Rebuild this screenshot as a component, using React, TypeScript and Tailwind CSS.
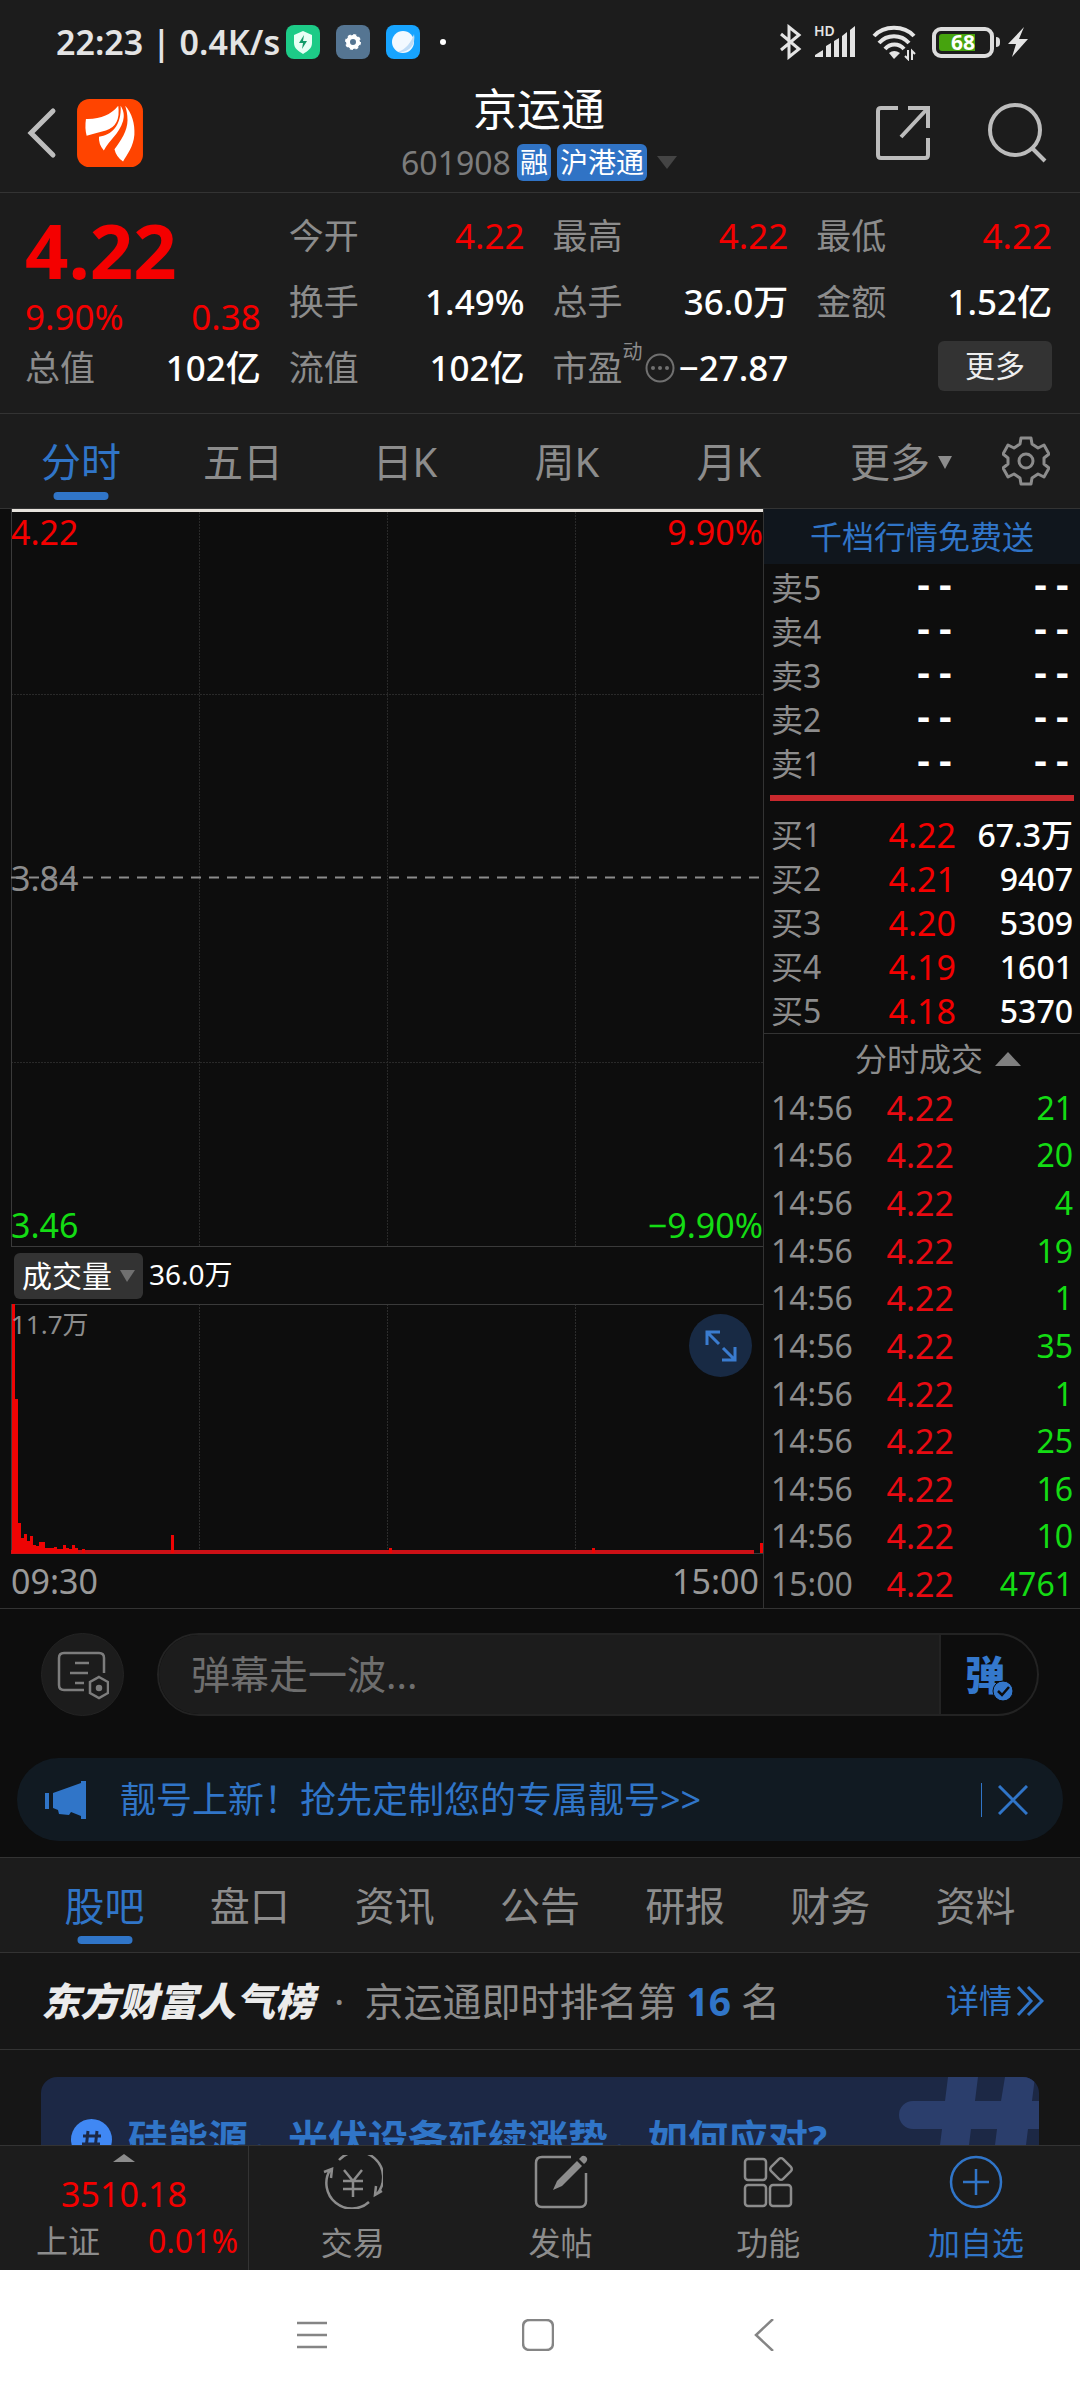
import { useState } from 'react';
import type { ReactNode } from 'react';

const quoteColumns = [
  [
    { label: '今开', value: '4.22', red: true },
    { label: '换手', value: '1.49%' },
    { label: '流值', value: '102亿' },
  ],
  [
    { label: '最高', value: '4.22', red: true },
    { label: '总手', value: '36.0万' },
    { label: '市盈', value: '−27.87', dynamic: true },
  ],
  [
    { label: '最低', value: '4.22', red: true },
    { label: '金额', value: '1.52亿' },
  ],
];

const periods = ['分时', '五日', '日K', '周K', '月K'];

const sells = ['卖5', '卖4', '卖3', '卖2', '卖1'];

const buys = [
  { label: '买1', price: '4.22', amount: '67.3万' },
  { label: '买2', price: '4.21', amount: '9407' },
  { label: '买3', price: '4.20', amount: '5309' },
  { label: '买4', price: '4.19', amount: '1601' },
  { label: '买5', price: '4.18', amount: '5370' },
];

const trades = [
  ['14:56', '21'],
  ['14:56', '20'],
  ['14:56', '4'],
  ['14:56', '19'],
  ['14:56', '1'],
  ['14:56', '35'],
  ['14:56', '1'],
  ['14:56', '25'],
  ['14:56', '16'],
  ['14:56', '10'],
  ['15:00', '4761'],
];

// [x, height] of the bars that rise above the base line
const volumeBars = [
  [1, 249], [4, 154], [7, 30], [10, 15], [13, 19], [16, 12], [19, 17],
  [22, 8], [25, 7], [28, 11], [31, 11], [34, 5], [37, 5], [40, 5],
  [43, 6], [46, 4], [49, 4], [52, 8], [55, 5], [58, 4], [61, 8],
  [64, 5], [71, 4], [160, 18], [378, 5], [581, 5], [749, 10],
];

const sections = ['股吧', '盘口', '资讯', '公告', '研报', '财务', '资料'];

const StatusBar = () => (
  <div className="flex h-[84px] items-center justify-between pl-14 pr-[52px] text-[#e4e4e4]">
    <div className="flex items-center gap-4">
      <span className="-mr-[10px] text-[34px] leading-10 font-semibold whitespace-nowrap">
        22:23 | 0.4K/s
      </span>
      <svg width="34" height="34" viewBox="0 0 34 34">
        <rect width="34" height="34" rx="8" fill="#1dcb87" />
        <path d="M17 6l9 4v8c0 5-4 8-9 11-5-3-9-6-9-11v-8z" fill="#e9fff5" />
        <path d="M18 10l-5 8h4l-1 6 5-8h-4z" fill="#149b68" />
      </svg>
      <svg width="34" height="34" viewBox="0 0 34 34">
        <rect width="34" height="34" rx="8" fill="#557592" />
        <circle cx="17" cy="17" r="5" fill="none" stroke="#fff" strokeWidth="4" />
        <circle
          cx="17"
          cy="17"
          r="7"
          fill="none"
          stroke="#fff"
          strokeWidth="2"
          strokeDasharray="3 2.5"
        />
      </svg>
      <svg width="34" height="34" viewBox="0 0 34 34">
        <rect width="34" height="34" rx="8" fill="#17a4ff" />
        <circle cx="17" cy="17" r="11" fill="#f2f9ff" />
        <path d="M28 9c2 10-4 19-16 18 8-3 13-9 16-18z" fill="#bfdcf6" />
      </svg>
      <span className="ml-1 size-[6px] rounded-full bg-white" />
    </div>
    <div className="flex items-center">
      <svg width="24" height="36" viewBox="0 0 24 36" fill="none" stroke="currentColor" strokeWidth="3">
        <path d="M3 10l18 15-10 8V3l10 8L3 26" />
      </svg>
      <div className="relative ml-3 flex h-9 w-[42px]">
        <span className="absolute top-0 left-0 text-[14px] leading-[14px] font-semibold">HD</span>
        <svg width="42" height="36" viewBox="0 0 42 36" fill="currentColor">
          <path d="M1 33v-2l8-5v7zM12 33V22l5-3v14zM20 33V17l5-3v19zM28 33V12l5-4v25zM36 33V6l5-4v31z" />
        </svg>
      </div>
      <svg className="ml-4" width="44" height="38" viewBox="0 0 44 38" fill="none" stroke="currentColor" strokeWidth="4">
        <path d="M2 13C12 2 32 2 42 13M7 20c8-9 22-9 30 0M13 26c5-6 14-6 19 0" />
        <path d="M17 30q5-4 11 0l-6 6z" fill="currentColor" stroke="none" />
        <path d="M36 27v9l-3-3M40 37v-9l3 3" strokeWidth="2" />
      </svg>
      <div className="relative ml-4 flex h-[31px] w-[62px] items-center justify-center rounded-[9px] border-4 border-[#dcdcdc]">
        <span className="absolute inset-y-[3px] left-[3px] w-9 rounded-l-[3px] bg-[#46a30e]" />
        <span className="relative text-[21px] leading-6 font-bold text-white">68</span>
      </div>
      <span className="ml-[2px] h-[10px] w-1 rounded-r bg-[#dcdcdc]" />
      <svg className="ml-2" width="20" height="30" viewBox="0 0 20 30" fill="currentColor">
        <path d="M16 0L0 17h8L4 30l16-18h-9z" />
      </svg>
    </div>
  </div>
);

const TitleBar = () => (
  <div className="grid h-[109px] grid-cols-[1fr_auto_1fr] items-center border-b border-[#333] pr-8 pb-[14px] pl-[26px]">
    <div className="flex items-center gap-5">
      <button aria-label="返回">
        <svg width="31" height="52" viewBox="0 0 31 52" fill="none" stroke="#bdbdbd" strokeWidth="5" strokeLinecap="round">
          <path d="M27 4L5 26l22 22" />
        </svg>
      </button>
      <svg width="66" height="68" viewBox="0 0 192 198">
        <rect width="192" height="198" rx="36" fill="#ff4400" />
        <g fill="#fff">
          <path d="M26 58Q88 60 120 20Q128 78 84 92Q54 100 28 107Q22 84 26 58Z" />
          <path d="M127 20C137 36 138 50 134 64C122 104 94 118 78 150Q62 132 64 110C100 106 130 78 127 20Z" />
          <path d="M140 20C160 40 169 74 167 104C164 140 146 160 134 182Q114 168 109 146C128 122 147 92 147 62C147 44 144 32 140 20Z" />
        </g>
      </svg>
    </div>
    <div className="flex flex-col items-center gap-[10px] pl-1">
      <h1 className="text-[44px] leading-[50px] text-white">京运通</h1>
      <div className="flex items-center gap-[6px]">
        <span className="text-[32px] leading-9 text-[#7d7d7d]">601908</span>
        <span className="rounded-[6px] bg-[#3073c5] px-[3px] text-[28px] leading-[37px] text-white">融</span>
        <span className="rounded-[6px] bg-[#3073c5] px-[3px] text-[28px] leading-[37px] text-white">沪港通</span>
        <svg className="ml-1" width="20" height="13" viewBox="0 0 20 13" fill="#444">
          <path d="M0 0h20L10 13z" />
        </svg>
      </div>
    </div>
    <div className="flex items-center justify-end gap-[58px] text-[#bcbcbc]">
      <button aria-label="分享">
        <svg width="54" height="54" viewBox="0 0 54 54" fill="none" stroke="currentColor" strokeWidth="4">
          <path d="M22 2H5q-3 0-3 3v44q0 3 3 3h44q3 0 3-3V32M32 2h20v20M52 2L25 31" />
        </svg>
      </button>
      <button aria-label="搜索">
        <svg width="60" height="60" viewBox="0 0 60 60" fill="none" stroke="currentColor" strokeWidth="4">
          <circle cx="27" cy="27" r="25" />
          <path d="M44 45l13 13" />
        </svg>
      </button>
    </div>
  </div>
);

const Quote = () => (
  <section className="grid h-[221px] grid-cols-4 gap-7 border-b border-[#333] pr-7 pl-[25px] text-[35px]">
    <div className="pt-[14px]">
      <div className="text-[76px] leading-[86px] font-bold text-[#f40000]">4.22</div>
      <div className="flex justify-between leading-[48px] text-[#f40000]">
        <span>9.90%</span>
        <span>0.38</span>
      </div>
      <div className="flex justify-between leading-[54px]">
        <span className="text-[#8c8c8c]">总值</span>
        <span className="font-medium text-white">102亿</span>
      </div>
    </div>
    {quoteColumns.map((column, index) => (
      <div key={index} className="pt-[10px]">
        {column.map((item) => (
          <div key={item.label} className="flex items-center justify-between leading-[66px] whitespace-nowrap">
            <span className="flex items-center text-[#8c8c8c]">
              {item.label}
              {item.dynamic && (
                <>
                  <span className="relative -top-4 text-[20px]">动</span>
                  <svg className="ml-[2px]" width="30" height="30" viewBox="0 0 30 30" fill="#707070">
                    <circle cx="15" cy="15" r="13.5" fill="none" stroke="#707070" strokeWidth="2" />
                    <circle cx="8" cy="15" r="2" />
                    <circle cx="15" cy="15" r="2" />
                    <circle cx="22" cy="15" r="2" />
                  </svg>
                </>
              )}
            </span>
            <span className={item.red ? 'text-[#f40000]' : 'font-medium text-white'}>
              {item.value}
            </span>
          </div>
        ))}
        {column.length < 3 && (
          <div className="flex justify-end pt-[6px]">
            <button className="w-[114px] rounded-[6px] bg-[#333] text-[30px] leading-[50px] text-[#eee]">
              更多
            </button>
          </div>
        )}
      </div>
    ))}
  </section>
);

interface TabProps {
  label: string;
  active: boolean;
  className: string;
  onClick: () => void;
}

const Tab = ({ label, active, className, onClick }: TabProps) => (
  <button
    onClick={onClick}
    className={`relative flex items-center justify-center pt-[2px] text-[40px] ${className}
      ${active ? 'text-[#3075c8]' : 'text-[#8c8c8c]'}`}
  >
    {label}
    {active && (
      <span className="absolute bottom-2 left-1/2 h-2 w-[55px] -translate-x-1/2 rounded-full bg-[#3075c8]" />
    )}
  </button>
);

const PeriodTabs = () => {
  const [period, setPeriod] = useState('分时');

  return (
    <nav className="flex h-[95px] border-b border-[#333]">
      {periods.map((p) => (
        <Tab key={p} label={p} active={p === period} className="w-[15%]" onClick={() => setPeriod(p)} />
      ))}
      <button className="flex flex-1 items-center justify-center gap-2 pt-[2px] pl-5 text-[40px] text-[#8c8c8c]">
        更多
        <svg width="14" height="13" viewBox="0 0 14 13" fill="currentColor">
          <path d="M0 0h14L7 13z" />
        </svg>
      </button>
      <button aria-label="设置" className="flex w-[10%] items-center justify-center">
        <svg width="48" height="50" viewBox="0 0 48 50" fill="none" stroke="#8c8c8c" strokeWidth="3" strokeLinejoin="round">
          <path d="M19 2h10l1 6 6 4 6-3 5 9-5 4v6l5 4-5 9-6-3-6 4-1 6H19l-1-6-6-4-6 3-5-9 5-4v-6l-5-4 5-9 6 3 6-4z" />
          <circle cx="24" cy="25" r="7" />
        </svg>
      </button>
    </nav>
  );
};

const Chart = () => (
  <div className="min-w-0 flex-1 border-r border-[#333] pl-[11px] text-[34px] leading-10">
    <div className="relative">
      <svg className="block h-[738px] w-full" viewBox="0 0 752 738" preserveAspectRatio="none" fill="none">
        <path d="M188.5 3v735M376.5 3v735M564.5 3v735M0 185.5h752M0 553.5h752" stroke="#292929" strokeDasharray="2 1" />
        <path d="M.5 0v738M0 737.5h752" stroke="#3a3a3a" />
        <path d="M0 368.5h752" stroke="#8c8c8c" strokeWidth="2" strokeDasharray="10 8" />
        <path d="M1 1.5h751" stroke="#e6e2dc" strokeWidth="3" />
      </svg>
      <span className="absolute top-[3px] left-0 text-[#f40000]">4.22</span>
      <span className="absolute top-[3px] right-0 text-[#f40000]">9.90%</span>
      <span className="absolute top-1/2 left-0 -translate-y-1/2 text-[#8c8c8c]">3.84</span>
      <span className="absolute bottom-[2px] left-0 text-[#14dc14]">3.46</span>
      <span className="absolute right-0 bottom-[2px] text-[#14dc14]">−9.90%</span>
    </div>
    <div className="flex h-[57px] items-center gap-[6px] pl-[3px] text-white">
      <button className="flex h-[46px] items-center gap-2 rounded-[6px] bg-[#333] px-2 text-[30px]">
        成交量
        <svg width="15" height="12" viewBox="0 0 15 12" fill="#707070">
          <path d="M0 0h15L7 12z" />
        </svg>
      </button>
      <span className="pb-1 text-[28px]">36.0万</span>
    </div>
    <div className="relative">
      <svg className="block h-[250px] w-full" viewBox="0 0 752 250" preserveAspectRatio="none">
        <path d="M188.5 0v250M376.5 0v250M564.5 0v250" stroke="#2c2c2c" strokeDasharray="2 1" />
        <path d="M0 .5h752M.5 0v250M0 249.5h752" stroke="#3a3a3a" fill="none" />
        <path d="M0 246h743v4H0z" fill="#cc1016" />
        {volumeBars.map(([x, height]) => (
          <rect key={x} x={x} y={249 - height} width="3" height={height} fill="#ee0404" />
        ))}
      </svg>
      <span className="absolute top-0 left-0 text-[26px] text-[#8c8c8c]">11.7万</span>
      <button
        aria-label="全屏"
        className="absolute top-[10px] right-[11px] flex size-[63px] items-center justify-center rounded-full bg-[#182a44]"
      >
        <svg width="34" height="34" viewBox="0 0 34 34" fill="none" stroke="#3a7cd0" strokeWidth="3">
          <path d="M3 16V3h13M3 3l12 12M31 18v13H18M31 31L19 19" />
        </svg>
      </button>
    </div>
    <div className="flex h-[54px] items-center justify-between pr-1 text-[#999]">
      <span>09:30</span>
      <span>15:00</span>
    </div>
  </div>
);

const OrderBook = () => (
  <aside className="flex w-[316px] shrink-0 flex-col text-[32px] leading-10">
    <a href="#level" className="mb-[2px] bg-[#10161d] text-center leading-[55px] text-[#3075c8]">
      千档行情免费送
    </a>
    <table className="mx-[7px] table-fixed">
      <tbody>
        {sells.map((label) => (
          <tr key={label} className="h-11">
            <th className="w-[68px] p-0 text-left font-normal text-[#8c8c8c]">{label}</th>
            <td className="w-[117px] p-0 text-right font-['Liberation_Mono',monospace] text-[36px] font-bold text-white">--</td>
            <td className="p-0 text-right font-['Liberation_Mono',monospace] text-[36px] font-bold text-white">--</td>
          </tr>
        ))}
      </tbody>
    </table>
    <div className="mx-[6px] mt-[9px] mb-3 h-[6px] bg-[#c8282d]" />
    <table className="mx-[7px] table-fixed">
      <tbody>
        {buys.map((row) => (
          <tr key={row.label} className="h-11">
            <th className="w-[68px] p-0 text-left font-normal text-[#8c8c8c]">{row.label}</th>
            <td className="w-[117px] p-0 text-right text-[34px] text-[#f40000]">{row.price}</td>
            <td className="p-0 text-right font-medium text-white">{row.amount}</td>
          </tr>
        ))}
      </tbody>
    </table>
    <button className="flex h-[51px] items-center justify-center gap-3 border-t border-[#333] pl-8 text-[#8c8c8c]">
      分时成交
      <svg width="26" height="14" viewBox="0 0 26 14" fill="#808080">
        <path d="M0 14h26L13 0z" />
      </svg>
    </button>
    <table className="mx-[7px] h-[524px] table-fixed">
      <tbody>
        {trades.map(([time, amount], index) => (
          <tr key={index}>
            <td className="w-[85px] p-0 text-[#8c8c8c]">{time}</td>
            <td className="w-[98px] p-0 text-right text-[34px] text-[#e80a12]">4.22</td>
            <td className="p-0 text-right text-[#14dc14]">{amount}</td>
          </tr>
        ))}
      </tbody>
    </table>
  </aside>
);

const Danmu = () => (
  <section className="bg-[#0d0d0d] pt-6 pb-4">
    <div className="flex gap-[33px] px-[41px]">
      <button
        aria-label="弹幕设置"
        className="flex size-[83px] shrink-0 items-center justify-center rounded-full border border-[#232323] bg-[#1c1c1c]"
      >
        <svg width="52" height="50" viewBox="0 0 52 50" fill="none" stroke="#7d7d7d" strokeWidth="2.5">
          <path d="M27 40H7q-5 0-5-5V8q0-5 5-5h35q5 0 5 5v15M18 13h14M13 23h18M18 33h9" />
          <path d="M42 27l9 5v11l-9 5-9-5V32z" />
          <circle cx="42" cy="38" r="2" fill="#7d7d7d" />
        </svg>
      </button>
      <div className="flex h-[83px] flex-1 overflow-hidden rounded-full border-2 border-[#232323]">
        <input
          aria-label="弹幕"
          placeholder="弹幕走一波..."
          className="min-w-0 flex-1 border-r-2 border-[#232323] bg-[#1c1c1c] pl-8 text-[39px] text-[#ccc] outline-none placeholder:text-[#6e6e6e]"
        />
        <button aria-label="弹幕开关" className="relative w-24 pr-2 text-[40px] leading-[70px] font-black text-[#3478cc]">
          弹
          <svg className="absolute top-[45px] left-[51px]" width="22" height="22" viewBox="0 0 22 22">
            <circle cx="11" cy="11" r="10" fill="#3478cc" stroke="#0d0d0d" strokeWidth="1" />
            <path d="M6 11l4 4 7-8" fill="none" stroke="#0d0d0d" strokeWidth="2.5" />
          </svg>
        </button>
      </div>
    </div>
    <div className="mx-[17px] mt-[42px] flex h-[83px] items-center rounded-full bg-[#111a22] pr-[35px] pl-7 text-[#3075c8]">
      <svg width="42" height="38" viewBox="0 0 42 38" fill="currentColor">
        <path d="M0 12h4v16H0zM8 12L36 2V0h5v38h-5v-3l-10-4-2 3-10-1-1-4-5-2z" />
      </svg>
      <a href="#number" className="ml-[33px] flex-1 text-[36px]">
        靓号上新！抢先定制您的专属靓号&gt;&gt;
      </a>
      <span className="h-[34px] w-px bg-[#3075c8]" />
      <button aria-label="关闭" className="ml-4">
        <svg width="30" height="30" viewBox="0 0 30 30" fill="none" stroke="currentColor" strokeWidth="3">
          <path d="M1 1l28 28M29 1L1 29" />
        </svg>
      </button>
    </div>
  </section>
);

const Community = () => {
  const [section, setSection] = useState('股吧');

  return (
    <section className="bg-[#161616]">
      <nav className="flex h-24 border-y border-[#333] bg-[#1c1c1c] px-8">
        {sections.map((s) => (
          <Tab key={s} label={s} active={s === section} className="flex-1" onClick={() => setSection(s)} />
        ))}
      </nav>
      <div className="flex h-[97px] items-center border-b border-[#333] pr-9 pl-[41px] text-[39px] whitespace-nowrap text-[#8c8c8c]">
        <strong className="font-black text-[#ebebeb] italic">东方财富人气榜</strong>
        <span className="mx-5">·</span>
        <span>京运通即时排名第</span>
        <strong className="mx-[10px] text-[39px] text-[#3075c8]">16</strong>
        <span>名</span>
        <a href="#rank" className="ml-auto flex items-center gap-1 text-[33px] text-[#3075c8]">
          详情
          <svg width="28" height="30" viewBox="0 0 28 30" fill="none" stroke="currentColor" strokeWidth="3">
            <path d="M2 1l13 14L2 29M12 1l14 14-14 14" />
          </svg>
        </a>
      </div>
      <a
        href="#topic"
        className="relative mx-[41px] mt-[27px] flex h-[124px] items-center overflow-hidden rounded-2xl bg-[#1c2845] pl-[30px] text-[40px] font-bold text-[#3075c8]"
      >
        <svg className="absolute top-0 right-0" width="140" height="124" viewBox="0 0 140 124" fill="#2b3e6c">
          <path d="M49 0h30l-3 24h26l4-24h30l-3 24h7v28h-11l-3 24h10v26h-14l-3 22H89l3-22H65l-3 22H33l3-22H16a13 13 0 010-26h24l3-24H14a14 14 0 010-28h32zM72 52l-3 24h26l3-24z" />
        </svg>
        <svg className="mr-4 shrink-0" width="41" height="41" viewBox="0 0 41 41" fill="none">
          <circle cx="20.5" cy="20.5" r="20.5" fill="#4088f4" />
          <path d="M17 12l-2 18M26 12l-2 18M12 17h18M11 25h18" stroke="#1c2845" strokeWidth="3" />
        </svg>
        <span className="relative whitespace-nowrap">硅能源，光伏设备延续涨势，如何应对?</span>
      </a>
    </section>
  );
};

interface ActionProps {
  label: string;
  children: ReactNode;
  primary?: boolean;
}

const Action = ({ label, children, primary }: ActionProps) => (
  <button
    className={`flex flex-1 flex-col items-center gap-[14px] pt-[9px] text-[32px] leading-10
      ${primary ? 'text-[#3075c8]' : 'text-[#8c8c8c]'}`}
  >
    <svg width="60" height="54" viewBox="0 0 60 54" fill="none" stroke="currentColor" strokeWidth="2.5">
      {children}
    </svg>
    {label}
  </button>
);

const BottomBar = () => (
  <footer className="flex h-[125px] shrink-0 border-t border-[#333] bg-[#1c1c1c]">
    <button className="flex w-[249px] shrink-0 flex-col items-center border-r border-[#333] pt-2 text-[#f40000]">
      <svg width="22" height="8" viewBox="0 0 22 8" fill="#8c8c8c">
        <path d="M0 8h22L11 0z" />
      </svg>
      <span className="mt-3 text-[34px] leading-10">3510.18</span>
      <span className="mt-1 flex w-full justify-between pr-[10px] pl-9 text-[32px] leading-[46px]">
        <span className="text-[#8c8c8c]">上证</span>
        <span>0.01%</span>
      </span>
    </button>
    <Action label="交易">
      <path d="M16 5A25.5 25.5 0 0154 39M46 47A25.5 25.5 0 017 15M1 17l8-3-1 9M59 36l-7 4 1-9" />
      <path d="M21 15l9 11 9-11M20 26h20M20 34h20M30 26v16" />
    </Action>
    <Action label="发帖">
      <path d="M40 2H11q-6 0-6 6v38q0 6 6 6h38q6 0 6-6V18" />
      <path d="M22 35l4-9 20-20 5 5-20 20z" fill="currentColor" stroke="none" />
      <path d="M48 4l3-3q3-1 5 2 1 3-3 6z" fill="currentColor" stroke="none" />
    </Action>
    <Action label="功能">
      <rect x="7" y="4" width="21" height="21" rx="3" />
      <rect x="7" y="30" width="21" height="21" rx="3" />
      <rect x="32" y="30" width="21" height="21" rx="3" />
      <rect x="34.5" y="5.5" width="17" height="17" rx="3" transform="rotate(45 43 14)" />
    </Action>
    <Action label="加自选" primary>
      <circle cx="30" cy="27" r="25" />
      <path d="M30 14v26M17 27h26" />
    </Action>
  </footer>
);

const SystemNav = () => (
  <div className="flex h-[130px] shrink-0 items-center justify-center gap-[194px] bg-white pr-1">
    {[
      { label: '菜单', d: 'M1 4h30M1 16h30M1 28h30' },
      { label: '主页', d: 'M8 1h16q7 0 7 7v16q0 7-7 7H8q-7 0-7-7V8q0-7 7-7z' },
      { label: '后退', d: 'M25 0L8 16l17 16' },
    ].map((item) => (
      <button key={item.label} aria-label={item.label}>
        <svg width="32" height="32" viewBox="0 0 32 32" fill="none" stroke="#858585" strokeWidth="2.5">
          <path d={item.d} />
        </svg>
      </button>
    ))}
  </div>
);

const App = () => (
  <div className="flex h-screen flex-col overflow-hidden bg-[#1c1c1c] font-['Noto_Sans','Noto_Sans_CJK_SC',sans-serif]">
    <header className="shrink-0">
      <StatusBar />
      <TitleBar />
    </header>
    <main className="min-h-0 flex-1 overflow-hidden">
      <Quote />
      <PeriodTabs />
      <div className="flex border-b border-[#333] bg-[#0d0d0d]">
        <Chart />
        <OrderBook />
      </div>
      <Danmu />
      <Community />
    </main>
    <BottomBar />
    <SystemNav />
  </div>
);

export default App;
